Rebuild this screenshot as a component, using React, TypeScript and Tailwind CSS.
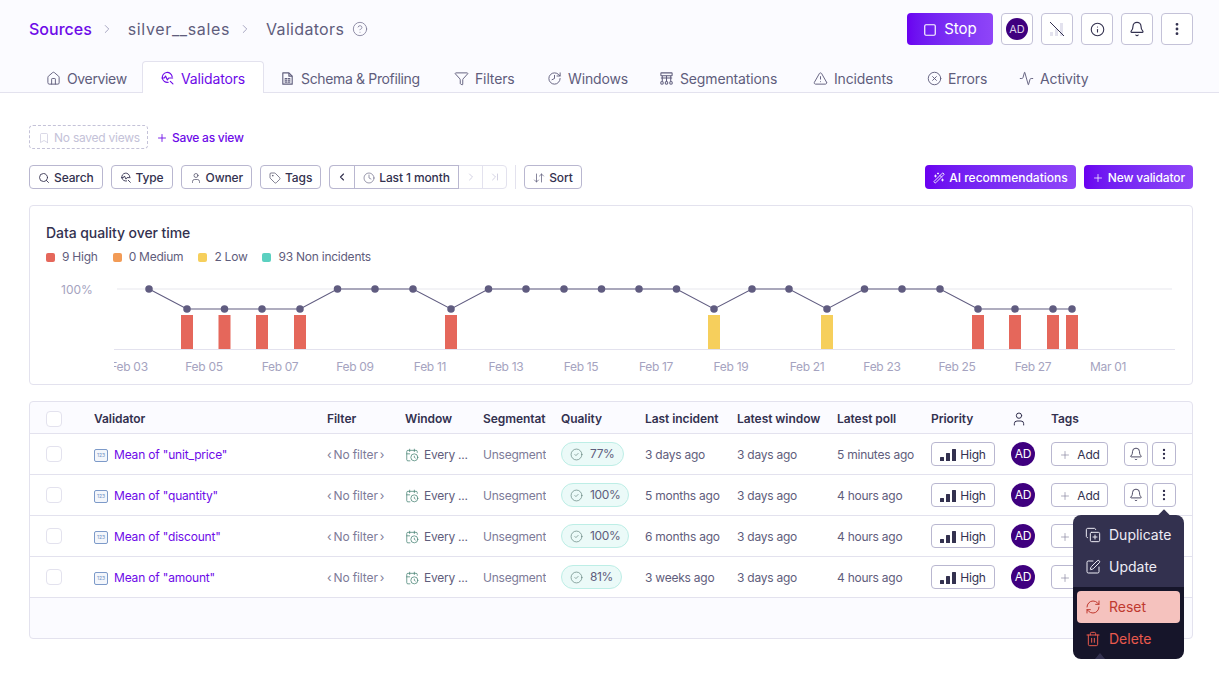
import {
  Activity,
  ArrowDownUp,
  Bell,
  Bookmark,
  CalendarClock,
  ChevronLast,
  ChevronLeft,
  ChevronRight,
  CircleCheck,
  CircleHelp,
  CircleX,
  Clock,
  CopyPlus,
  EllipsisVertical,
  Funnel,
  History,
  House,
  Info,
  Plus,
  RefreshCw,
  Search,
  Square,
  SquarePen,
  Tag,
  Trash2,
  TriangleAlert,
  User,
  WandSparkles,
} from "lucide-react";
import type { ReactNode } from "react";

const COLS =
  "grid grid-cols-[64px_233px_78px_78px_78px_84px_92px_100px_94px_80px_40px_73px_1fr] items-center";

function ValidatorIcon({ className }: { className?: string }) {
  return (
    <svg viewBox="0 0 16 16" fill="none" stroke="currentColor" strokeWidth="1.2" strokeLinecap="round" strokeLinejoin="round" className={className}>
      <path d="M13 6.2A5.3 5.3 0 1 0 8.8 12" />
      <path d="M2 7.5h2.6l1.3-2.2 2 4.2 1.4-2h4.2" />
      <path d="M11 11l2.8 2.8" />
    </svg>
  );
}

function SchemaIcon({ className }: { className?: string }) {
  return (
    <svg viewBox="0 0 16 16" fill="none" stroke="currentColor" strokeWidth="1.2" strokeLinejoin="round" className={className}>
      <path d="M3 2h6.5L13 5.5V14H3z" />
      <path d="M9.5 2v3.5H13" />
      <rect x="5" y="7.5" width="6" height="5" fill="currentColor" stroke="none" />
      <path d="M5 9.2h6M5 10.9h6M8 7.5v5" stroke="#fbfbff" strokeWidth="0.6" />
    </svg>
  );
}

function SegmentIcon({ className }: { className?: string }) {
  return (
    <svg viewBox="0 0 16 16" fill="none" stroke="currentColor" strokeWidth="1.1" className={className}>
      <rect x="2" y="2" width="12" height="3" rx="0.5" />
      <path d="M3.5 5v6M8 5v6M12.5 5v6M2 7.5h12" />
      <circle cx="3.2" cy="12.7" r="1.4" />
      <circle cx="8" cy="12.7" r="1.4" />
      <circle cx="12.8" cy="12.7" r="1.4" />
    </svg>
  );
}

function PriorityBars() {
  return (
    <svg viewBox="0 0 16 12" className="h-3 w-4 text-[#33314f]" fill="currentColor">
      <rect x="0" y="8" width="4" height="4" rx="0.5" />
      <rect x="6" y="4" width="4" height="8" rx="0.5" />
      <rect x="12" y="0" width="4" height="12" rx="0.5" />
    </svg>
  );
}

function Avatar({ small }: { small?: boolean }) {
  return (
    <span
      className={
        small
          ? "flex size-[22px] items-center justify-center rounded-full bg-[#3f007f] text-[11px] text-[#d8cfe8]"
          : "flex size-6 items-center justify-center rounded-full bg-[#3f007f] text-xs text-white"
      }
    >
      AD
    </span>
  );
}

function IconBox({ children }: { children: ReactNode }) {
  return (
    <button className="flex h-8 w-8 items-center justify-center rounded border border-[#c4c2d8] bg-white text-[#33314f]">
      {children}
    </button>
  );
}

function FilterButton({ icon, label }: { icon: ReactNode; label: string }) {
  return (
    <button className="flex h-6 items-center gap-1 rounded border border-[#b9b7d0] bg-white px-2 pt-px text-xs font-medium tracking-[-0.01em] text-[#33314f]">
      {icon}
      {label}
    </button>
  );
}

function Tab({
  icon,
  label,
  width,
  tight,
  active,
}: {
  icon: ReactNode;
  label: string;
  width: string;
  tight?: boolean;
  active?: boolean;
}) {
  return (
    <div
      className={
        width +
        (active
          ? " relative -mb-px flex h-8 items-center gap-[6px] rounded-t border border-b-0 border-[#e3e2ee] bg-white pl-[17px] pt-[2px] text-[#6d0ae8]"
          : " flex h-[31px] items-center gap-[6px] pl-4 pt-[3px] text-[#5f5d7c]")
      }
    >
      {icon}
      <span className={tight ? "whitespace-nowrap text-[14px] tracking-[-0.025em]" : "whitespace-nowrap text-[14px] tracking-[-0.01em]"}>
        {label}
      </span>
    </div>
  );
}

const tabIcon = "size-[15px] shrink-0";

const rows = [
  { name: 'Mean of "unit_price"', quality: "77%", incident: "3 days ago", poll: "5 minutes ago", bell: true },
  { name: 'Mean of "quantity"', quality: "100%", incident: "5 months ago", poll: "4 hours ago", bell: true },
  { name: 'Mean of "discount"', quality: "100%", incident: "6 months ago", poll: "4 hours ago", bell: false },
  { name: 'Mean of "amount"', quality: "81%", incident: "3 weeks ago", poll: "4 hours ago", bell: false },
];

// chart coordinates are page pixels minus the svg origin (30, 275)
const xs = [149, 187, 224.5, 262, 300, 337.5, 375, 413, 451, 488.5, 526, 564, 601.5, 639, 676.5, 714, 752, 789, 827, 864.5, 902, 940, 978, 1015, 1053, 1072];
const low = new Set([187, 224.5, 262, 300, 451, 714, 827, 978, 1015, 1053, 1072]);
const yellow = new Set([714, 827]);
const dates = [
  ["Feb 03", 129],
  ["Feb 05", 204],
  ["Feb 07", 280],
  ["Feb 09", 355],
  ["Feb 11", 430],
  ["Feb 13", 506],
  ["Feb 15", 581],
  ["Feb 17", 656],
  ["Feb 19", 731],
  ["Feb 21", 807],
  ["Feb 23", 882],
  ["Feb 25", 957],
  ["Feb 27", 1033],
  ["Mar 01", 1108],
] as const;

function Chart() {
  const pts = xs.map((x) => [x - 30, (low.has(x) ? 309 : 289) - 275]);
  return (
    <svg width="1162" height="105" className="block">
      <defs>
        <clipPath id="axis-clip">
          <rect x="84" y="0" width="1078" height="105" />
        </clipPath>
      </defs>
      <text x="31" y="19" fontSize="12" fill="#a5a3c0">100%</text>
      <line x1="87" x2="1142" y1="14" y2="14" stroke="#f3f3f6" strokeWidth="2" />
      <line x1="84" x2="1145" y1="74.5" y2="74.5" stroke="#e3e2ee" />
      {xs.filter((x) => low.has(x)).map((x) => (
        <rect key={x} x={x - 36} y="40" width="12" height="34" fill={yellow.has(x) ? "#f6cf5c" : "#e5675b"} />
      ))}
      <polyline points={pts.map((p) => p.join(",")).join(" ")} fill="none" stroke="#605c80" strokeWidth="1.1" />
      {pts.map(([x, y]) => (
        <circle key={x} cx={x} cy={y} r="3.75" fill="#605c80" />
      ))}
      <g clipPath="url(#axis-clip)">
        {dates.map(([label, x]) => (
          <text key={label} x={x - 30} y="96" fontSize="12" letterSpacing="-0.3" textAnchor="middle" fill="#a5a3c0">
            {label}
          </text>
        ))}
      </g>
    </svg>
  );
}

function LegendItem({ color, label }: { color: string; label: string }) {
  return (
    <div className="flex items-center gap-[7px] text-xs tracking-[-0.02em] text-[#5f5d7c]">
      <span className={"size-[9px] rounded-[2px] " + color} />
      {label}
    </div>
  );
}

export default function App() {
  return (
    <div className="relative min-h-[683px] bg-white [font-family:Inter,sans-serif]">
      {/* Header */}
      <div className="border-b border-[#e3e2ee] bg-[#fbfbff]">
        <div className="flex h-[61px] items-start justify-between pl-[29px] pr-[26px] pt-[13px]">
          <div className="flex h-8 items-center text-base text-[#5f5d7c]">
            <span className="font-medium text-[#6d0ae8]">Sources</span>
            <ChevronRight className="ml-2 mr-[14px] size-[14px] text-[#9c9ab8]" strokeWidth={1.5} />
            <span className="tracking-[0.04em]">silver__sales</span>
            <ChevronRight className="ml-2 mr-[14px] size-[14px] text-[#9c9ab8]" strokeWidth={1.5} />
            <span className="tracking-[0.02em]">Validators</span>
            <CircleHelp className="ml-2 size-4 text-[#7d7b98]" strokeWidth={1.25} />
          </div>
          <div className="flex gap-2">
            <button className="flex h-8 w-[86px] items-center justify-center gap-[7px] rounded bg-gradient-to-r from-[#6a00f0] to-[#8f45f8] pt-px text-[15px] text-white">
              <Square className="size-[14px]" strokeWidth={2} />
              Stop
            </button>
            <IconBox>
              <Avatar small />
            </IconBox>
            <IconBox>
              <svg viewBox="0 0 16 16" className="size-4">
                <rect x="1" y="11" width="3" height="4" fill="#e3e2ee" />
                <rect x="6" y="8" width="3" height="7" fill="#e3e2ee" />
                <rect x="11" y="2" width="3" height="13" fill="#e3e2ee" />
                <path d="M1 1l14 14" stroke="#33314f" strokeWidth="1" />
              </svg>
            </IconBox>
            <IconBox>
              <Info className="size-[15px]" strokeWidth={1.75} />
            </IconBox>
            <IconBox>
              <Bell className="size-4" strokeWidth={1.75} />
            </IconBox>
            <IconBox>
              <EllipsisVertical className="size-4" strokeWidth={2.25} />
            </IconBox>
          </div>
        </div>
        <div className="flex pl-[30px]">
          <Tab width="w-[112px]" tight icon={<House className={tabIcon} strokeWidth={1.5} />} label="Overview" />
          <Tab width="w-[122px]" active icon={<ValidatorIcon className={tabIcon} />} label="Validators" />
          <Tab width="w-[174px]" tight icon={<SchemaIcon className={tabIcon} />} label="Schema & Profiling" />
          <Tab width="w-[93px]" icon={<Funnel className={tabIcon} strokeWidth={1.5} />} label="Filters" />
          <Tab width="w-[112px]" icon={<History className={tabIcon + " -scale-x-100"} strokeWidth={1.5} />} label="Windows" />
          <Tab width="w-[154px]" icon={<SegmentIcon className={tabIcon} />} label="Segmentations" />
          <Tab width="w-[114px]" icon={<TriangleAlert className={tabIcon} strokeWidth={1.5} />} label="Incidents" />
          <Tab width="w-[92px]" icon={<CircleX className={tabIcon} strokeWidth={1.5} />} label="Errors" />
          <Tab width="w-[110px]" icon={<Activity className={tabIcon} strokeWidth={1.5} />} label="Activity" />
        </div>
      </div>

      <div className="px-[26px] pl-[29px] pt-8">
        {/* Saved views */}
        <div className="flex items-center gap-2">
          <div className="flex h-6 w-[119px] items-center gap-1 rounded border border-dashed border-[#c4c2d8] pl-2 pt-px text-xs tracking-[-0.02em] text-[#c4c2d8]">
            <Bookmark className="size-3" strokeWidth={1.25} />
            No saved views
          </div>
          <div className="flex items-center gap-1 pt-px text-xs font-medium tracking-[-0.02em] text-[#6d0ae8]">
            <Plus className="size-3" strokeWidth={1.75} />
            Save as view
          </div>
        </div>

        {/* Toolbar */}
        <div className="mt-4 flex items-center">
          <div className="flex gap-2">
            <FilterButton icon={<Search className="size-3" strokeWidth={1.75} />} label="Search" />
            <FilterButton icon={<ValidatorIcon className="size-3" />} label="Type" />
            <FilterButton icon={<User className="size-3" strokeWidth={1.25} />} label="Owner" />
            <FilterButton icon={<Tag className="size-3" strokeWidth={1.25} />} label="Tags" />
            <div className="flex h-6 items-center rounded border border-[#e3e2ee] bg-white text-xs font-medium tracking-[-0.01em] text-[#33314f]">
              <span className="-my-px -ml-px flex h-6 w-[26px] items-center justify-center rounded-l border border-[#b9b7d0]">
                <ChevronLeft className="size-3" strokeWidth={2.25} />
              </span>
              <span className="-my-px -ml-px flex h-6 w-[105px] items-center gap-1 whitespace-nowrap border border-[#b9b7d0] pl-2 pt-px">
                <Clock className="size-3 text-[#5f5d7c]" strokeWidth={1.25} />
                Last 1 month
              </span>
              <span className="flex h-full w-6 items-center justify-center border-r border-[#e3e2ee] text-[#c4c2d8]">
                <ChevronRight className="size-3" strokeWidth={1.5} />
              </span>
              <span className="flex h-full w-[23px] items-center justify-center text-[#c4c2d8]">
                <ChevronLast className="size-3" strokeWidth={1.5} />
              </span>
            </div>
          </div>
          <div className="mx-2 h-6 w-px bg-[#e3e2ee]" />
          <FilterButton icon={<ArrowDownUp className="size-3 text-[#5f5d7c]" strokeWidth={1.5} />} label="Sort" />
          <div className="ml-auto flex gap-2">
            <button className="flex h-6 items-center gap-1 rounded bg-gradient-to-r from-[#6a00f0] to-[#8f45f8] px-2 pt-px text-xs font-medium text-white">
              <WandSparkles className="size-3" strokeWidth={1.75} />
              AI recommendations
            </button>
            <button className="flex h-6 items-center gap-1 rounded bg-gradient-to-r from-[#6a00f0] to-[#8f45f8] px-2 pt-px text-xs font-medium tracking-[-0.01em] text-white">
              <Plus className="size-3" strokeWidth={1.5} />
              New validator
            </button>
          </div>
        </div>

        {/* Data quality chart */}
        <div className="mt-4 h-[180px] rounded border border-[#e3e2ee] bg-white">
          <div className="px-4 pt-[18px] text-sm font-medium leading-[18px] tracking-[-0.005em] text-[#33314f]">
            Data quality over time
          </div>
          <div className="mt-[7px] flex h-4 gap-[15px] px-4">
            <LegendItem color="bg-[#e5675b]" label="9 High" />
            <LegendItem color="bg-[#f29b56]" label="0 Medium" />
            <LegendItem color="bg-[#f6cf5c]" label="2 Low" />
            <LegendItem color="bg-[#5bd0c0]" label="93 Non incidents" />
          </div>
          <div className="mt-[10px]">
            <Chart />
          </div>
        </div>

        {/* Validators table */}
        <div className="mt-4 overflow-hidden rounded border border-[#e3e2ee] bg-[#fbfbff]">
          <div className={COLS + " h-[31px] pt-[2px] text-xs font-semibold tracking-[-0.005em] text-[#33314f]"}>
            <span className="ml-4 size-4 rounded border border-[#e3e2ee] bg-white" />
            <span>Validator</span>
            <span>Filter</span>
            <span>Window</span>
            <span className="w-[63px] overflow-hidden whitespace-nowrap">Segmentation</span>
            <span>Quality</span>
            <span>Last incident</span>
            <span>Latest window</span>
            <span>Latest poll</span>
            <span>Priority</span>
            <User className="size-4" strokeWidth={1.5} />
            <span>Tags</span>
            <span />
          </div>
          {rows.map((row) => (
            <div key={row.name} className={COLS + " h-[41px] border-t border-[#e3e2ee] bg-white text-xs tracking-[-0.02em] text-[#5f5d7c]"}>
              <span className="ml-4 size-4 rounded border border-[#e3e2ee] bg-white" />
              <span className="flex items-center gap-[6px] pt-[2px] tracking-[-0.015em] text-[#6d0ae8]">
                <span className="flex h-[13px] w-[14px] items-center justify-center rounded-[2px] border border-[#7d9ac9] bg-[#f3f6fb] text-[5px] leading-none tracking-normal text-[#6f8fc4]">
                  123
                </span>
                {row.name}
              </span>
              <span className="flex gap-[2px] pt-[2px] tracking-[-0.01em] text-[#7d7b98]">
                <span>‹</span>
                <span>No filter</span>
                <span>›</span>
              </span>
              <span className="flex items-center gap-[5px] pt-[2px]">
                <CalendarClock className="size-[14px] text-[#3f7d6e]" strokeWidth={1.25} />
                Every ...
              </span>
              <span className="w-[63px] overflow-hidden whitespace-nowrap pt-[2px] text-[#7d7b98]">Unsegmented</span>
              <span className="flex">
                <span className="inline-flex h-6 items-center gap-[7px] rounded-full border border-[#bdeee6] bg-[#ebfaf8] pl-2 pr-2 tracking-[-0.03em]">
                  <CircleCheck className="size-[13px] text-[#5f7f7a]" strokeWidth={1.25} />
                  {row.quality}
                </span>
              </span>
              <span className="pt-[2px]">{row.incident}</span>
              <span className="pt-[2px]">3 days ago</span>
              <span className="pt-[2px]">{row.poll}</span>
              <span className="flex h-6 w-16 items-center justify-center gap-1 rounded border border-[#b9b7d0] pt-px text-[#33314f]">
                <PriorityBars />
                High
              </span>
              <Avatar />
              <span className="flex h-6 w-[57px] items-center justify-center gap-[6px] rounded border border-[#b9b7d0] pt-px text-[#33314f]">
                <Plus className="size-3 text-[#7d7b98]" strokeWidth={1.25} />
                Add
              </span>
              {row.bell ? (
                <span className="flex gap-1">
                  <span className="flex size-6 items-center justify-center rounded border border-[#b9b7d0] text-[#33314f]">
                    <Bell className="size-[14px]" strokeWidth={1.5} />
                  </span>
                  <span className="flex size-6 items-center justify-center rounded border border-[#b9b7d0] text-[#33314f]">
                    <EllipsisVertical className="size-[14px]" strokeWidth={2} />
                  </span>
                </span>
              ) : (
                <span />
              )}
            </div>
          ))}
          <div className="h-[41px] border-t border-[#e3e2ee]" />
        </div>
      </div>

      {/* Row actions menu */}
      <div className="absolute left-[1073px] top-[515px] w-[111px] text-sm text-[#eeedf6]">
        <span className="absolute -top-1 left-[87px] size-2 rotate-45 bg-[#33314f]" />
        <div className="relative flex h-[72px] flex-col justify-center gap-2 rounded-t-lg bg-[#33314f] px-3">
          <div className="flex h-6 items-center gap-2">
            <CopyPlus className="size-4" strokeWidth={1.5} />
            Duplicate
          </div>
          <div className="flex h-6 items-center gap-2">
            <SquarePen className="size-4" strokeWidth={1.5} />
            Update
          </div>
        </div>
        <div className="relative h-[72px] rounded-b-lg bg-[#16152a] px-1 pt-1">
          <div className="flex h-8 items-center gap-2 rounded bg-[#f5c2be] px-2 text-[#c0392f]">
            <RefreshCw className="size-4" strokeWidth={1.5} />
            Reset
          </div>
          <div className="flex h-8 items-center gap-2 px-2 text-[#e8594d]">
            <Trash2 className="size-4" strokeWidth={1.5} />
            Delete
          </div>
          <span className="absolute bottom-0 left-[22px] h-[6px] w-[10px] bg-[#33314f] [clip-path:polygon(50%_0,100%_100%,0_100%)]" />
        </div>
      </div>
    </div>
  );
}
